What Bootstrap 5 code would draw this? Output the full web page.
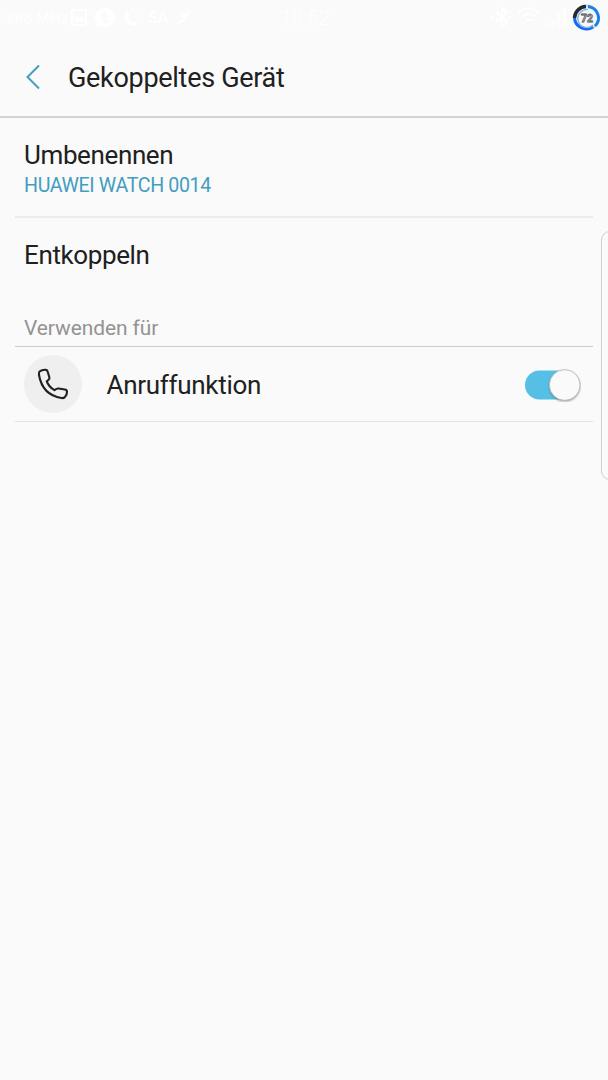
<!DOCTYPE html>
<html lang="de">
<head>
<meta charset="utf-8">
<meta name="viewport" content="width=device-width, initial-scale=1">
<title>Gekoppeltes Gerät</title>
<link href="https://cdn.jsdelivr.net/npm/bootstrap@5.3.0/dist/css/bootstrap.min.css" rel="stylesheet">
<style>
body{background:#fafafa;color:#202020;font-family:Roboto,sans-serif;height:1080px;overflow:hidden;position:relative}
.status{height:36px;color:#fff;padding-left:6px;padding-right:7px;font-size:15.5px;line-height:36px}
.clock{left:280px;top:0;font-size:21px;font-style:italic;font-weight:300}
.appbar{height:82px;border-bottom:2px solid #d2d2d2;padding-left:25px;padding-top:2px}
.appbar h1{font-size:27px;letter-spacing:-.3px;font-weight:400;line-height:32px;margin:2px 0 0 27px}
.settings{padding:0 15px}
.item{padding:0 9px;border-bottom:2px solid #ebebeb}
.rename{height:100px;padding-top:21px}
.title{font-size:26px;letter-spacing:-.38px;line-height:32px}
.value{font-size:19.6px;letter-spacing:-.35px;line-height:26px;padding-top:2px;color:#429dc0}
.unpair{height:76px;padding-bottom:2px}
.section-label{height:53px;padding:19px 9px 0;font-size:20.9px;letter-spacing:-.05px;line-height:30px;color:#939393;border-bottom:1px solid #cacaca}
.call{height:75px;border-bottom:1px solid #e3e3e3;padding-right:12px}
.call .title{padding-top:1px;letter-spacing:-.3px}
.disc{width:58px;height:58px;background:#efefef;margin-right:24.5px}
.toggle{width:56px;height:34px;margin-top:1px}
.edge{left:601px;top:231px;width:24px;height:249px;border:1px solid #cfcfcf;border-radius:9px}
</style>
</head>
<body>
<header class="status d-flex align-items-center position-relative">
  <span>288 MHz</span>
  <span class="position-absolute clock">19:52</span>
  <svg class="position-absolute start-0 top-0" width="608" height="36" fill="#fff">
    <path fill-rule="evenodd" d="M73 9h12q2 0 2 2v13q0 2-2 2H73q-2 0-2-2V11q0-2 2-2Zm0 2v13h12V11Zm1 11v-3l3-3 2 2 2-2 3 3v3Z"/>
    <path fill-rule="evenodd" d="M96 27l1-4A10 9.5 0 1 1 101 26ZM103 11v4h-2v2h2v5q1 3 6 1v-2q-3 1-3-1v-3h3v-2h-3v-4Z"/>
    <path d="M126 11l2 0 2 4-2 2q1 3 4 5l2-1 3 3-2 2c-8 0-13-8-9-15Z"/>
    <path d="M131 9q7 1 8 8m-8-5q4 1 5 5" fill="none" stroke="#fff"/>
    <text x="148" y="23" font-size="16" font-weight="500">SA</text>
    <path d="M191 11l-11 5 4 2-7 6 11-5-3-2Z" stroke="#fff"/>
    <path d="M496 12l11 10-5 5V8l5 5-11 9m-5-5h2m16 0h2" fill="none" stroke="#fff" stroke-width="2"/>
    <path d="M518 13q11-9 22 0m-18 4q7-6 14 0m-10 4q3-3 6 0" fill="none" stroke="#fff" stroke-width="2"/>
    <path d="M545 27v-3h4v3Zm6 0v-7h4v7Zm6 0V12h4v15Zm6 0V8h3v19Z" opacity=".6"/>
    <circle cx="586.5" cy="17.5" r="12" fill="#f4f8fb" stroke="#c8d5dc" stroke-width="2"/>
    <path d="M574.5 18A12 12 0 0 1 586 6.5" fill="none" stroke="#252a2e" stroke-width="3.5"/>
    <path d="M588 6.5A12 11.5 0 0 1 595 26" fill="none" stroke="#1781ec" stroke-width="3"/>
    <path d="M574.5 18A12 12 0 0 0 593 27" fill="none" stroke="#126bf0" stroke-width="3"/>
    <path d="M588 9.5A9 9 0 1 0 593 25" fill="none" stroke="#88b8e6" stroke-width="1.5"/>
    <text x="581" y="21.5" font-size="11" font-weight="700" textLength="12" lengthAdjust="spacingAndGlyphs" fill="#ddd" stroke="#555" stroke-width=".8">72</text>
  </svg>
</header>
<nav class="appbar d-flex align-items-center">
  <svg width="16" height="26" fill="none" stroke="#429fc2" stroke-width="2" aria-label="Zurück"><path d="M14 1.5L2.5 13 14 24.5"/></svg>
  <h1>Gekoppeltes Gerät</h1>
</nav>
<main class="settings">
  <div class="item rename"><div class="title">Umbenennen</div><div class="value">HUAWEI WATCH 0014</div></div>
  <div class="item unpair d-flex align-items-center border-0"><div class="title">Entkoppeln</div></div>
  <div class="section-label">Verwenden für</div>
  <div class="item call d-flex align-items-center">
    <div class="disc rounded-circle d-flex align-items-center justify-content-center">
      <svg width="58" height="58" viewBox="0 0 58 58" fill="none" stroke="#202020" stroke-width="2.1" stroke-linejoin="round"><path d="M15.5 16.5Q18 14.5 21.5 14.7Q23.3 14.8 23.8 17L25.4 22.5Q25.7 24 24.3 25L22.8 26.3Q24.5 31.5 30.5 35.2L32.3 34Q33.2 33.4 34.5 33.5L40.8 34.5Q43 34.8 43 36.7Q43.2 40 40.6 42.4Q39.5 43.3 37.5 43Q18.5 40 15 20Q14.8 17.5 15.5 16.5Z"/></svg>
    </div>
    <div class="title">Anruffunktion</div>
    <svg class="toggle ms-auto" viewBox="0 0 56 34" role="switch" aria-checked="true">
      <defs><filter id="knobShadow" x="-20%" y="-20%" width="140%" height="150%"><feGaussianBlur stdDeviation=".8"/></filter></defs>
      <rect y="2.5" width="50" height="29" rx="14.5" fill="#56bfe6"/>
      <circle cx="39.7" cy="18" r="15.5" fill="#666" opacity=".65" filter="url(#knobShadow)"/>
      <circle cx="39.7" cy="17" r="15.3" fill="#fafafa" stroke="#b8b8b8" stroke-width=".8"/>
    </svg>
  </div>
</main>
<div class="edge position-absolute"></div>
<script src="https://cdn.jsdelivr.net/npm/bootstrap@5.3.0/dist/js/bootstrap.bundle.min.js"></script>
</body>
</html>
